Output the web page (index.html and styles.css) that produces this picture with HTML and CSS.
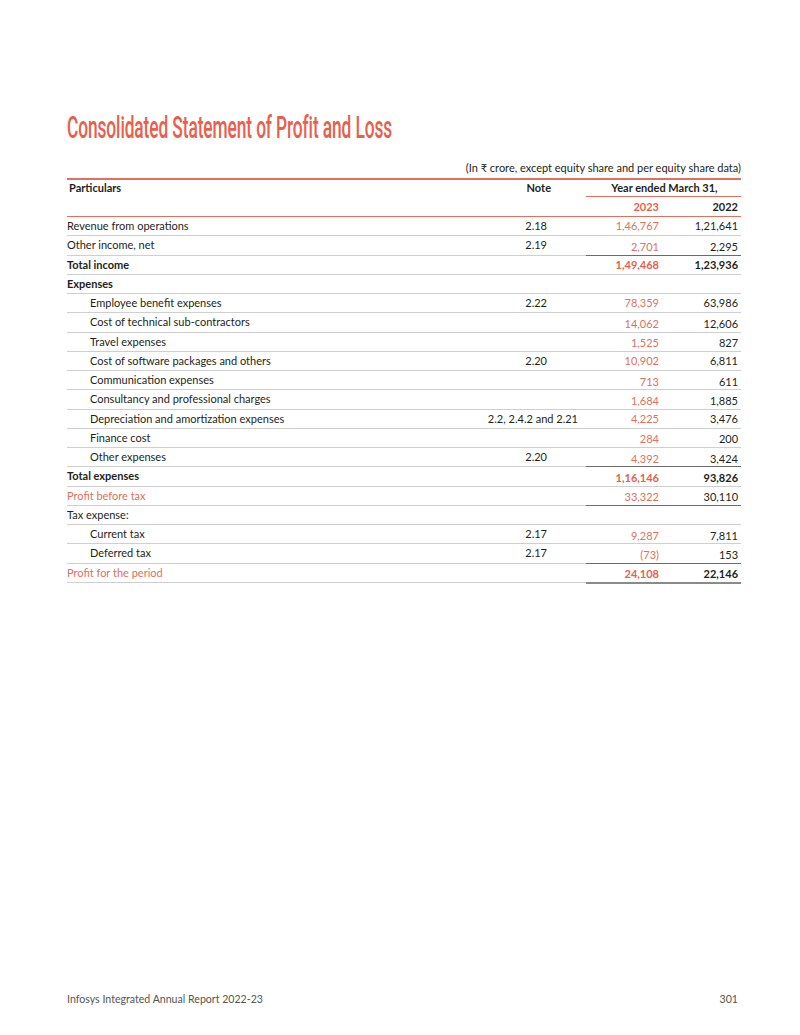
FILE: index.html
```html
<!DOCTYPE html>
<html>
<head>
<meta charset="utf-8">
<link rel="stylesheet" href="styles.css">
</head>
<body>
<div class="page">
  <h1 class="title"><span>Consolidated Statement of Profit and Loss</span></h1>
  <div class="unit">(In ₹ crore, except equity share and per equity share data)</div>
  <table class="pl">
    <colgroup>
      <col class="c-part"><col class="c-note"><col class="c-num"><col class="c-num2">
    </colgroup>
    <thead>
      <tr class="h1">
        <th class="part">Particulars</th>
        <th class="note">Note</th>
        <th class="year" colspan="2">Year ended March 31,</th>
      </tr>
      <tr class="h2">
        <th></th><th></th>
        <th class="num cur">2023</th>
        <th class="num">2022</th>
      </tr>
    </thead>
    <tbody>
      <tr><td>Revenue from operations</td><td class="note">2.18</td><td class="num cur">1,46,767</td><td class="num">1,21,641</td></tr>
      <tr><td>Other income, net</td><td class="note">2.19</td><td class="num cur low">2,701</td><td class="num low">2,295</td></tr>
      <tr class="total"><td class="b">Total income</td><td></td><td class="num cur b">1,49,468</td><td class="num b">1,23,936</td></tr>
      <tr><td class="b">Expenses</td><td></td><td></td><td></td></tr>
      <tr><td class="ind">Employee benefit expenses</td><td class="note">2.22</td><td class="num cur">78,359</td><td class="num">63,986</td></tr>
      <tr><td class="ind">Cost of technical sub-contractors</td><td></td><td class="num cur low">14,062</td><td class="num low">12,606</td></tr>
      <tr><td class="ind">Travel expenses</td><td></td><td class="num cur low">1,525</td><td class="num low">827</td></tr>
      <tr><td class="ind">Cost of software packages and others</td><td class="note">2.20</td><td class="num cur">10,902</td><td class="num">6,811</td></tr>
      <tr><td class="ind">Communication expenses</td><td></td><td class="num cur low">713</td><td class="num low">611</td></tr>
      <tr><td class="ind">Consultancy and professional charges</td><td></td><td class="num cur low">1,684</td><td class="num low">1,885</td></tr>
      <tr><td class="ind">Depreciation and amortization expenses</td><td class="note wide">2.2, 2.4.2 and 2.21</td><td class="num cur">4,225</td><td class="num">3,476</td></tr>
      <tr><td class="ind">Finance cost</td><td></td><td class="num cur low">284</td><td class="num low">200</td></tr>
      <tr><td class="ind">Other expenses</td><td class="note">2.20</td><td class="num cur low">4,392</td><td class="num low">3,424</td></tr>
      <tr class="total"><td class="b">Total expenses</td><td></td><td class="num cur b low">1,16,146</td><td class="num b low">93,826</td></tr>
      <tr class="sub"><td class="red">Profit before tax</td><td></td><td class="num cur low">33,322</td><td class="num low">30,110</td></tr>
      <tr><td>Tax expense:</td><td></td><td></td><td></td></tr>
      <tr><td class="ind">Current tax</td><td class="note">2.17</td><td class="num cur low">9,287</td><td class="num low">7,811</td></tr>
      <tr><td class="ind">Deferred tax</td><td class="note">2.17</td><td class="num cur low">(73)</td><td class="num low">153</td></tr>
      <tr class="total sub last"><td class="red">Profit for the period</td><td></td><td class="num cur b low">24,108</td><td class="num b low">22,146</td></tr>
    </tbody>
  </table>
</div>
<footer class="foot">
  <span>Infosys Integrated Annual Report 2022-23</span>
  <span>301</span>
</footer>
</body>
</html>
```

FILE: styles.css
```css
html, body {
  margin: 0;
  padding: 0;
  background: #fff;
}
body {
  width: 800px;
  height: 1035px;
  position: relative;
  font-family: Lato, "Open Sans", sans-serif;
  color: #231f20;
}
.page {
  padding: 108px 59px 0 67px;
}
.title {
  margin: 0;
  font-family: Roboto, "Liberation Sans", sans-serif;
  font-weight: 500;
  font-size: 31px;
  line-height: 40px;
  color: #e8604c;
  white-space: nowrap;
}
.title span {
  display: inline-block;
  transform: scaleX(0.56);
  transform-origin: left center;
  letter-spacing: -0.2px;
}
.unit {
  margin-top: 13px;
  text-align: right;
  font-size: 11px;
  line-height: 14px;
}
.pl {
  width: 674px;
  margin-top: 3px;
  border-collapse: collapse;
  font-size: 11px;
  table-layout: fixed;
}
.c-part { width: 393px; }
.c-note { width: 126px; }
.c-num { width: 76px; }
.c-num2 { width: 79px; }
.pl thead tr.h1 { border-top: 2px solid #e2705e; }
.pl thead tr.h2 { border-bottom: 1px solid #e2705e; }
.pl th {
  font-weight: 700;
  padding: 0;
  height: 16px;
  line-height: 14px;
  vertical-align: middle;
}
.pl th.part { text-align: left; padding-left: 2px; }
.pl th.note { text-align: right; padding-right: 35px; }
.pl th.year { text-align: center; border-bottom: 1px solid #e2705e; padding-left: 2px; }
.pl .h2 th { height: 18px; padding-top: 1px; }
.pl tbody tr { border-bottom: 1px solid #cfcfcf; }
.pl td {
  padding: 0;
  height: 18.25px;
  line-height: 14px;
  vertical-align: middle;
  white-space: nowrap;
}
.pl td.ind { padding-left: 23px; }
.pl td.note { text-align: right; padding-right: 39px; }
.pl td.note.wide { padding-right: 8px; }
.pl .num { text-align: right; padding-right: 3px; }
.pl .cur { color: #e8604c; }
.pl td.cur { color: #e0705f; }
.pl td.cur.b, .pl th.cur { color: #e8604c; }
.pl .b { font-weight: 700; }
.pl .red { color: #e0705f; }
.pl td.low { padding-top: 3px; height: 15.25px; }
.pl tr.total td.num { border-top: 1px solid #6b6b6b; }
.pl tr.sub td.num { border-bottom: 1px solid #6b6b6b; }
.pl tr.last td.num { border-bottom: 2px solid #8a8a8a; }
.foot {
  position: absolute;
  left: 67px;
  right: 62px;
  top: 993px;
  display: flex;
  justify-content: space-between;
  font-size: 10.6px;
  color: #555;
}
```
